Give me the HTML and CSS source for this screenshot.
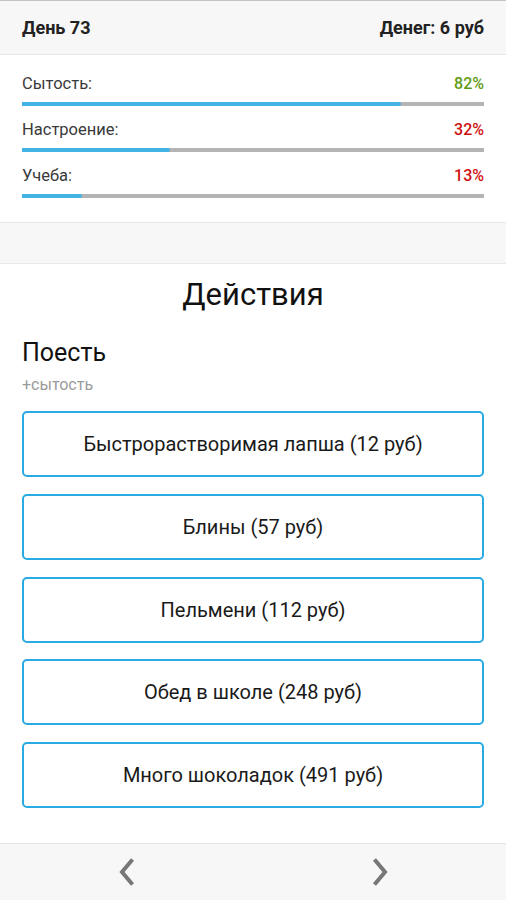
FILE: index.html
```html
<!DOCTYPE html>
<html lang="ru">
<head>
<meta charset="utf-8">
<title>Игра</title>
<link rel="stylesheet" href="styles.css">
</head>
<body>
<div class="app">
  <header class="topbar">
    <span class="day">День 73</span>
    <span class="money">Денег: 6 руб</span>
  </header>
  <section class="stats">
    <div class="stat">
      <div class="stat-head"><span class="stat-label">Сытость:</span><span class="stat-val good">82%</span></div>
      <div class="track"><div class="fill" style="width:82%"></div></div>
    </div>
    <div class="stat">
      <div class="stat-head"><span class="stat-label">Настроение:</span><span class="stat-val bad">32%</span></div>
      <div class="track"><div class="fill" style="width:32%"></div></div>
    </div>
    <div class="stat">
      <div class="stat-head"><span class="stat-label">Учеба:</span><span class="stat-val bad">13%</span></div>
      <div class="track"><div class="fill" style="width:13%"></div></div>
    </div>
  </section>
  <div class="band"></div>
  <main class="actions">
    <h1 class="title">Действия</h1>
    <h2 class="group">Поесть</h2>
    <div class="hint">+сытость</div>
    <div class="buttons">
      <button class="btn">Быстрорастворимая лапша (12 руб)</button>
      <button class="btn">Блины (57 руб)</button>
      <button class="btn">Пельмени (112 руб)</button>
      <button class="btn">Обед в школе (248 руб)</button>
      <button class="btn">Много шоколадок (491 руб)</button>
    </div>
  </main>
  <nav class="bottom">
    <div class="nav-cell">
      <svg class="chev" width="18" height="30" viewBox="0 0 18 30"><path d="M14.5 2.5 L4 15 L14.5 27.5" fill="none" stroke="#777" stroke-width="4"/></svg>
    </div>
    <div class="nav-cell">
      <svg class="chev" width="18" height="30" viewBox="0 0 18 30"><path d="M3.5 2.5 L14 15 L3.5 27.5" fill="none" stroke="#777" stroke-width="4"/></svg>
    </div>
  </nav>
</div>
</body>
</html>
```
FILE: styles.css
```css
* { box-sizing: border-box; }
html, body { margin: 0; padding: 0; }
body {
  font-family: Roboto, "Noto Sans", "Liberation Sans", sans-serif;
  color: #222;
  background: #fff;
}
.app {
  height: 900px;
  display: flex;
  flex-direction: column;
}
.topbar {
  height: 55px;
  background: #f7f7f7;
  border-top: 1px solid #c4c4c4;
  border-bottom: 1px solid #e6e6e6;
  display: flex;
  align-items: center;
  justify-content: space-between;
  padding: 0 22px;
  font-size: 18px;
  font-weight: 700;
  color: #222;
}
.stats {
  padding: 18px 22px 11px;
}
.stat { margin-bottom: 13px; }
.stat-head {
  display: flex;
  justify-content: space-between;
  align-items: center;
  height: 20px;
  font-size: 16.5px;
}
.stat-label { color: #3a3a3a; }
.stat-val { font-size: 16px; font-weight: 500; }
.good { color: #5f9c12; }
.bad { color: #d01010; }
.track {
  margin-top: 9px;
  height: 4px;
  background: #b4b4b4;
}
.fill {
  height: 100%;
  background: #42b3e2;
  border-radius: 0 2px 2px 0;
}
.band {
  height: 42px;
  background: #f7f7f7;
  border-top: 1px solid #e8e8e8;
  border-bottom: 1px solid #e8e8e8;
}
.actions {
  flex: 1;
  padding: 13px 22px 0;
}
.title {
  margin: 0;
  text-align: center;
  font-size: 31px;
  font-weight: 400;
  line-height: 36px;
  color: #111;
}
.group {
  margin: 25px 0 0;
  font-size: 25px;
  font-weight: 400;
  line-height: 30px;
  color: #111;
}
.hint {
  margin-top: 7px;
  font-size: 16px;
  line-height: 20px;
  color: #9a9a9a;
}
.buttons {
  margin-top: 16px;
  display: flex;
  flex-direction: column;
  gap: 16.75px;
}
.btn {
  height: 66px;
  width: 100%;
  background: #fff;
  border: 2px solid #2aaae2;
  border-radius: 5px;
  font-family: Roboto, "Noto Sans", "Liberation Sans", sans-serif;
  font-size: 20px;
  color: #1a1a1a;
  padding: 0;
}
.bottom {
  height: 57px;
  background: #f7f7f7;
  border-top: 1px solid #e6e6e6;
  display: flex;
}
.nav-cell {
  flex: 1;
  display: flex;
  align-items: center;
  justify-content: center;
}
.chev { display: block; }
```
